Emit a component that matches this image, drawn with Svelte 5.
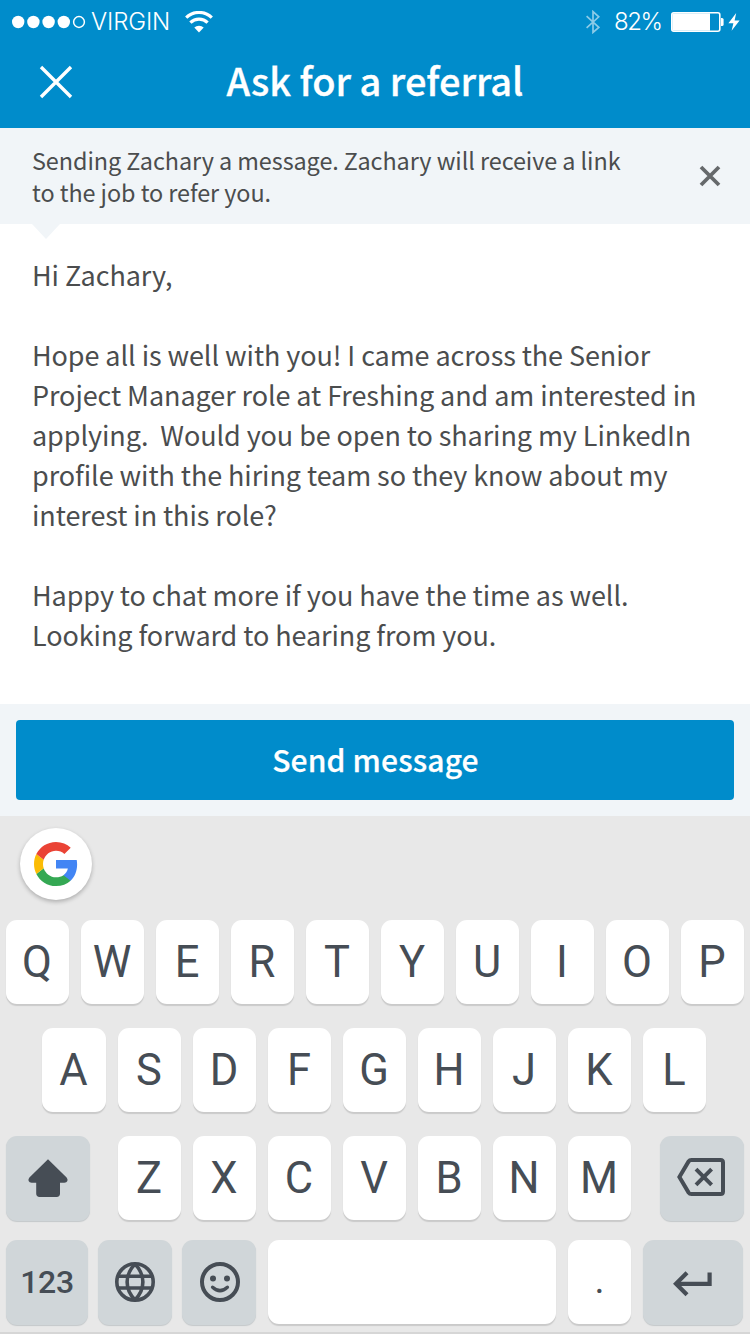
<script>
  const letter = [
    "Hi Zachary,",
    "",
    "Hope all is well with you! I came across the Senior",
    "Project Manager role at Freshing and am interested in",
    "applying.  Would you be open to sharing my LinkedIn",
    "profile with the hiring team so they know about my",
    "interest in this role?",
    "",
    "Happy to chat more if you have the time as well.",
    "Looking forward to hearing from you."
  ];

  const topRow = "QWERTYUIOP".split("");
  const homeRow = "ASDFGHJKL".split("");
  const bottomRow = "ZXCVBNM".split("");

  let showNotice = $state(true);
</script>

<main class="screen">
  <div class="top">
    <div class="status">
      <svg class="signal" width="74" height="14" viewBox="0 0 74 14" fill="#fff">
        <circle cx="6.2" cy="7" r="6.2" />
        <circle cx="21.4" cy="7" r="6.2" />
        <circle cx="36.6" cy="7" r="6.2" />
        <circle cx="51.8" cy="7" r="6.2" />
        <circle cx="67" cy="7" r="5.4" fill="none" stroke="#fff" stroke-width="1.5" />
      </svg>
      <span class="carrier">VIRGIN</span>
      <svg class="wifi" width="28" height="22" viewBox="0 0 28 22" fill="none" stroke="#fff" stroke-width="3.2">
        <path d="M1.2 6.6 A18.5 18.5 0 0 1 26.8 6.6" />
        <path d="M5.4 11.6 A12.2 12.2 0 0 1 22.6 11.6" />
        <path d="M14 21.6 L9.3 16.6 A6.6 6.6 0 0 1 18.7 16.6 Z" fill="#fff" stroke="none" />
      </svg>
      <svg class="bluetooth" width="14" height="24" viewBox="0 0 14 24" fill="none" stroke="#fff" stroke-width="1.7">
        <path d="M0.6 6.2 L12.8 17.3 L7 22.4 V1.6 L12.8 6.8 L0.6 17.9" />
      </svg>
      <span class="percent">82%</span>
      <svg class="battery" width="70" height="20" viewBox="0 0 70 20">
        <rect x="0.8" y="0.8" width="48" height="18.4" rx="2" fill="none" stroke="#fff" stroke-width="1.6" />
        <rect x="1.3" y="1.3" width="37.7" height="17.4" fill="#fff" />
        <path d="M50 6 h1 q1.6 0 1.6 1.6 v4.8 q0 1.6 -1.6 1.6 h-1 z" fill="#fff" />
        <path d="M65.2 1 L57.4 11.2 H62.4 L60.6 18.8 L68.6 8.4 H63.6 Z" fill="#fff" />
      </svg>
    </div>
    <header>
      <svg class="close" width="34" height="34" viewBox="0 0 34 34" stroke="#fff" stroke-width="3.4">
        <path d="M2 2 L32 32 M32 2 L2 32" />
      </svg>
      <h1>Ask for a referral</h1>
    </header>
  </div>

  {#if showNotice}
    <div class="notice">
      <p>
        <span>Sending Zachary a message. Zachary will receive a link</span>
        <span>to the job to refer you.</span>
      </p>
      <button class="dismiss" aria-label="Dismiss" onclick={() => (showNotice = false)}>
        <svg width="22" height="22" viewBox="0 0 22 22" stroke="#66696b" stroke-width="3.8">
          <path d="M2 2 L20 20 M20 2 L2 20" />
        </svg>
      </button>
    </div>
  {/if}

  <div class="letter">
    {#each letter as line}
      <div class="line">{line}</div>
    {/each}
  </div>

  <div class="send">
    <button>Send message</button>
  </div>

  <div class="keyboard">
    <div class="suggest">
      <div class="google">
        <svg width="44" height="44" viewBox="2 2 44 44">
          <path fill="#4285f4" d="M45.12 24.5c0-1.56-.14-3.06-.4-4.5H24v8.51h11.84c-.51 2.75-2.06 5.08-4.39 6.64v5.52h7.11c4.16-3.83 6.56-9.47 6.56-16.17z" />
          <path fill="#34a853" d="M24 46c5.94 0 10.92-1.97 14.56-5.33l-7.11-5.52c-1.97 1.32-4.49 2.1-7.45 2.1-5.73 0-10.58-3.87-12.31-9.07l-7.35 5.7C7.96 41.07 15.4 46 24 46z" />
          <path fill="#fbbc05" d="M11.69 28.18C11.25 26.86 11 25.45 11 24s.25-2.86.69-4.18l-7.35-5.7C2.85 17.09 2 20.45 2 24s.85 6.91 2.34 9.88l7.35-5.7z" />
          <path fill="#ea4335" d="M24 10.75c3.23 0 6.13 1.11 8.41 3.29l6.31-6.31C34.91 4.18 29.93 2 24 2 15.4 2 7.96 6.93 4.34 14.12l7.35 5.7c1.73-5.2 6.58-9.07 12.31-9.07z" />
        </svg>
      </div>
    </div>
    <div class="row">
      {#each topRow as key}
        <div class="key">{key}</div>
      {/each}
    </div>
    <div class="row home">
      {#each homeRow as key}
        <div class="key">{key}</div>
      {/each}
    </div>
    <div class="row">
      <div class="key fn shift">
        <svg width="40" height="38" viewBox="0 0 40 38" fill="#464d55">
          <path d="M20 0.3 L38.6 18.6 Q40 20.2 39.4 22 Q38.6 23.8 36.4 23.8 H32 V34.6 Q32 38 28.6 38 H11.6 Q8.2 38 8.2 34.6 V23.8 H3.6 Q1.4 23.8 0.6 22 Q0 20.2 1.4 18.6 Z" />
        </svg>
      </div>
      {#each bottomRow as key}
        <div class="key">{key}</div>
      {/each}
      <div class="key fn erase">
        <svg width="48" height="38" viewBox="0 0 48 38" fill="none" stroke="#464d55" stroke-width="4">
          <path d="M14.4 2 H43.5 Q46 2 46 4.5 V33.5 Q46 36 43.5 36 H14.4 Q12.6 36 11.6 34.6 L2.4 19 L11.6 3.4 Q12.6 2 14.4 2 Z" />
          <path d="M19 11.2 L34.6 26.8 M34.6 11.2 L19 26.8" />
        </svg>
      </div>
    </div>
    <div class="row last">
      <div class="key fn num">123</div>
      <div class="key fn lang">
        <svg width="40" height="40" viewBox="0 0 40 40" fill="none" stroke="#464d55" stroke-width="3.6">
          <circle cx="20" cy="20" r="18.2" />
          <path d="M3 14.2 H37 M3 26 H37" />
          <path d="M20 2 C9.5 13 9.5 27 20 38 M20 2 C30.5 13 30.5 27 20 38" />
        </svg>
      </div>
      <div class="key fn emoji">
        <svg width="40" height="40" viewBox="0 0 40 40" fill="none" stroke="#464d55" stroke-width="4">
          <circle cx="20" cy="20" r="18" />
          <circle cx="13" cy="16.4" r="3" fill="#464d55" stroke="none" />
          <circle cx="27" cy="16.4" r="3" fill="#464d55" stroke="none" />
          <path d="M12.6 25.2 Q20 32 27.4 25.2" stroke-width="3.4" stroke-linecap="round" />
        </svg>
      </div>
      <div class="key space"></div>
      <div class="key dot">.</div>
      <div class="key fn enter">
        <svg width="40" height="26" viewBox="0 0 40 26" fill="none" stroke="#464d55" stroke-width="4.2">
          <path d="M36.6 1.6 V12.8 H3" />
          <path d="M14 1.8 L3 12.8 L14 23.8" />
        </svg>
      </div>
    </div>
  </div>
</main>

<style>
  :global(body) {
    margin: 0;
  }

  .screen {
    width: 750px;
    height: 1334px;
    display: flex;
    flex-direction: column;
    overflow: hidden;
    background: #fff;
    font-family: "Noto Sans CJK SC", sans-serif;
    color: #4b4d4e;
  }

  .screen * {
    box-sizing: border-box;
  }

  svg {
    display: block;
    flex: none;
  }

  .top {
    height: 128px;
    background: #008ccb;
    color: #fff;
  }

  .status {
    height: 44px;
    padding-left: 12px;
    display: flex;
    align-items: center;
    font: 300 24px/44px "Inter", "Liberation Sans", sans-serif;
    white-space: nowrap;
  }

  .carrier {
    width: 78px;
    margin-left: 5px;
    letter-spacing: -0.15px;
  }

  .wifi {
    margin-left: 16px;
  }

  .bluetooth {
    margin-left: 373px;
    opacity: 0.55;
  }

  .percent {
    width: 47px;
    margin-left: 14px;
    letter-spacing: -1.5px;
  }

  .battery {
    margin-left: 10px;
  }

  header {
    height: 76px;
    display: grid;
    grid-template-columns: 112px 1fr 112px;
    align-items: center;
    justify-items: center;
  }

  h1 {
    margin: 0;
    padding-bottom: 4px;
    font-size: 38px;
    font-weight: 500;
    line-height: 72px;
    letter-spacing: -0.05px;
    white-space: nowrap;
    -webkit-text-stroke: 0.3px #fff;
  }

  .notice {
    position: relative;
    height: 96px;
    padding: 16px 29px 0 32px;
    display: flex;
    justify-content: space-between;
    background: #f1f5f8;
  }

  .notice::after {
    content: "";
    position: absolute;
    left: 32px;
    top: 96px;
    border: solid transparent;
    border-width: 15px 14px 0;
    border-top-color: #f1f5f8;
  }

  .notice p {
    margin: 0;
    font-size: 23.4px;
    line-height: 32px;
    letter-spacing: -0.07px;
    white-space: nowrap;
  }

  .notice p span {
    display: block;
  }

  .dismiss {
    height: 22px;
    margin-top: 21px;
    padding: 0;
    border: 0;
    background: none;
  }

  .letter {
    height: 480px;
    padding: 31px 32px 0;
    font-size: 27px;
    line-height: 40px;
    letter-spacing: -0.08px;
    white-space: pre;
  }

  .line {
    height: 40px;
  }

  .send {
    height: 112px;
    padding: 16px;
    background: #f1f5f8;
  }

  .send button {
    display: block;
    width: 100%;
    height: 80px;
    padding: 0 0 2px 1px;
    border: 0;
    border-radius: 4px;
    background: #008ccb;
    color: #fff;
    font: 500 30px/78px "Noto Sans CJK SC", sans-serif;
    letter-spacing: 0.15px;
    -webkit-text-stroke: 0.25px #fff;
  }

  .keyboard {
    height: 518px;
    background: #e8e8e8;
    border-bottom: 2px solid #d6d6d6;
    font-family: Roboto, sans-serif;
    color: #464d55;
  }

  .suggest {
    height: 104px;
    padding: 12px 20px;
  }

  .google {
    width: 72px;
    height: 72px;
    border-radius: 50%;
    background: #fff;
    box-shadow: 0 2px 4px rgba(0, 0, 0, 0.25);
    display: flex;
    align-items: center;
    justify-content: center;
  }

  .row {
    height: 84px;
    margin-bottom: 24px;
    padding: 0 6px;
    display: flex;
    gap: 12px;
  }

  .home {
    padding-left: 42px;
  }

  .home .key:first-child {
    width: 64px;
  }

  .last {
    margin-top: -4px;
    margin-bottom: 0;
  }

  .key {
    flex: none;
    width: 63px;
    height: 84px;
    padding-right: 1px;
    border-radius: 11px;
    background: #fff;
    box-shadow: 0 2px 1px #cacaca;
    display: flex;
    align-items: center;
    justify-content: center;
    font-size: 43.5px;
    line-height: 86px;
  }

  .fn {
    height: 85px;
    padding: 0 0 2px;
    background: #d0d6d9;
    box-shadow: 0 1px 1px #c4c8ca;
  }

  .row .key:not(.fn):not(.dot) {
    padding-top: 1px;
  }

  .shift {
    width: 84px;
    margin-right: 16px;
    padding-bottom: 1px;
  }

  .erase {
    width: 84px;
    margin-left: 17px;
    padding-bottom: 4px;
    padding-right: 2px;
  }

  .num {
    width: 82px;
    padding-bottom: 2px;
    font-size: 32px;
    font-weight: 500;
    letter-spacing: -0.3px;
  }

  .lang {
    width: 74px;
    margin-left: -2px;
  }

  .emoji {
    width: 74px;
    margin-left: -2px;
    padding-left: 2px;
  }

  .space {
    width: 288px;
  }

  .dot {
    padding-right: 0;
    padding-bottom: 5px;
    font-size: 38px;
  }

  .enter {
    width: 100px;
    padding: 2px 0 0;
  }
</style>
